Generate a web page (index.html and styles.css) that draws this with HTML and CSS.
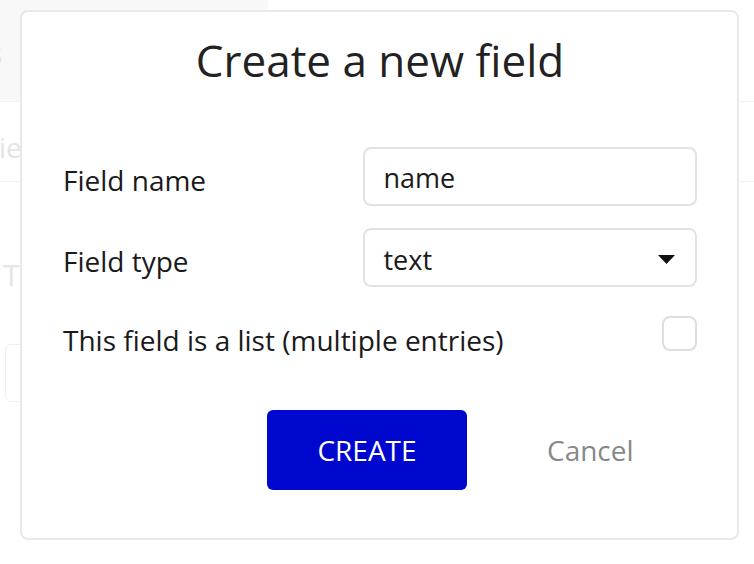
FILE: index.html
```html
<!DOCTYPE html>
<html lang="en">
<head>
<meta charset="utf-8">
<title>Create a new field</title>
<link rel="stylesheet" href="styles.css">
</head>
<body>
<div class="page">
  <div class="bg-header">
    <div class="bg-tab"><span class="bg-s">S</span></div>
  </div>
  <div class="bg-row"><span class="bg-ie">ie</span></div>
  <div class="bg-t">T</div>
  <div class="bg-box"></div>
</div>

<div class="modal">
  <h1 class="title">Create a new field</h1>
  <div class="form">
    <div class="row">
      <label class="label">Field name</label>
      <div class="input">name</div>
    </div>
    <div class="row">
      <label class="label">Field type</label>
      <div class="input select">
        <span>text</span>
        <svg class="caret" width="17" height="9" viewBox="0 0 17 9"><path d="M0 0H17L8.5 9Z" fill="#111"/></svg>
      </div>
    </div>
    <div class="row row-check">
      <label class="label">This field is a list (multiple entries)</label>
      <div class="checkbox"></div>
    </div>
  </div>
  <div class="actions">
    <button class="btn-create">CREATE</button>
    <button class="btn-cancel">Cancel</button>
  </div>
</div>
</body>
</html>
```

FILE: styles.css
```css
* { box-sizing: border-box; }
html, body {
  margin: 0;
  padding: 0;
  background: #ffffff;
  font-family: "Open Sans", "Noto Sans", "Liberation Sans", sans-serif;
  width: 754px;
  height: 564px;
  overflow: hidden;
}
.page {
  position: relative;
  width: 754px;
  height: 564px;
}
.bg-header {
  height: 102px;
  border-bottom: 1px solid #f2f2f2;
}
.bg-tab {
  width: 268px;
  height: 101px;
  background: #f8f8f8;
  padding-top: 42px;
}
.bg-s {
  display: block;
  margin-left: -10px;
  font-size: 22px;
  line-height: 26px;
  color: #e2e2e2;
}
.bg-row {
  height: 80px;
  border-bottom: 1px solid #f2f2f2;
  padding-top: 30px;
}
.bg-ie {
  font-size: 28px;
  line-height: 30px;
  color: #e4e4e4;
  margin-left: -1px;
}
.bg-t {
  margin-top: 76px;
  padding-left: 3px;
  font-size: 30px;
  line-height: 34px;
  color: #e4e4e4;
}
.bg-box {
  margin-top: 52px;
  margin-left: 5px;
  width: 200px;
  height: 58px;
  border: 1px solid #efefef;
  border-radius: 6px;
}

.modal {
  position: absolute;
  left: 20px;
  top: 10px;
  width: 719px;
  height: 530px;
  background: #ffffff;
  border: 2px solid #e9e9e9;
  border-radius: 8px;
  padding: 18px 40px 0 41px;
  display: flex;
  flex-direction: column;
}
.title {
  margin: 0;
  text-align: center;
  font-weight: 400;
  font-size: 44px;
  line-height: 60px;
  color: #222222;
}
.form {
  margin-top: 57px;
  display: flex;
  flex-direction: column;
  gap: 22px;
}
.row {
  display: flex;
  align-items: center;
}
.label {
  width: 300px;
  font-size: 28px;
  line-height: 38px;
  color: #1a1a1a;
  padding-top: 7px;
}
.input {
  width: 335px;
  height: 59px;
  border: 2px solid #e2e2e2;
  border-radius: 8px;
  padding: 2px 19px 0;
  font-size: 27px;
  line-height: 53px;
  color: #1a1a1a;
}
.select {
  display: flex;
  align-items: center;
  justify-content: space-between;
  padding-top: 3px;
  padding-right: 20px;
}
.caret { display: block; margin-top: 0; }
.row-check {
  margin-top: 7px;
  justify-content: space-between;
  align-items: flex-start;
}
.row-check .label {
  width: auto;
  padding-top: 5px;
}
.checkbox {
  width: 35px;
  height: 35px;
  border: 2px solid #dedede;
  border-radius: 8px;
}
.actions {
  margin-top: 51px;
  display: flex;
  align-items: center;
  padding-left: 204px;
}
.btn-create {
  width: 200px;
  height: 80px;
  border: none;
  border-radius: 6px;
  background: #0008cf;
  color: #ffffff;
  font-family: inherit;
  font-size: 28px;
  padding: 0;
}
.btn-cancel {
  margin-left: 80px;
  border: none;
  background: transparent;
  color: #888888;
  font-family: inherit;
  font-size: 28px;
  padding: 0;
}
```
